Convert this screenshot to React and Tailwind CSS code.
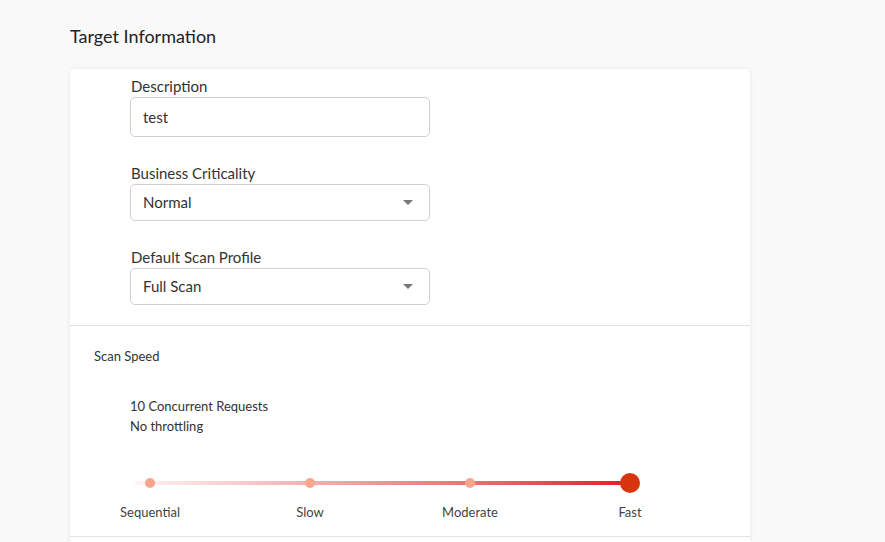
import React from "react";

function Field({ label, children }) {
  return (
    <div className="flex flex-col">
      <div className="h-[20px] leading-[18px] text-[15px] text-[#333] pl-[1px]">{label}</div>
      {children}
    </div>
  );
}

function Select({ value }) {
  return (
    <div className="w-[300px] h-[37px] border border-[#d0d0d0] rounded-[5px] flex items-center justify-between pl-[12px] pr-[16px] text-[15px] text-[#333]">
      <span>{value}</span>
      <svg width="10" height="6" viewBox="0 0 10 6"><path d="M0 0 L10 0 L5 5 Z" fill="#777" /></svg>
    </div>
  );
}

export default function App() {
  const labels = ["Sequential", "Slow", "Moderate", "Fast"];
  return (
    <div className="min-h-[542px] bg-[#f9f9f9] pl-[70px] pt-[25px]" style={{ fontFamily: "Lato, 'Noto Sans', sans-serif" }}>
      <h2 className="text-[18px] leading-[22px] text-[#222] h-[22px]">Target Information</h2>
      <div className="mt-[22px] w-[680px] bg-white rounded-[4px] shadow-[0_0_4px_rgba(0,0,0,0.08)]">
        <div className="pl-[60px] pt-[8px] pb-[20px] flex flex-col gap-[27px]">
          <Field label="Description">
            <div className="w-[300px] h-[40px] border border-[#d0d0d0] rounded-[5px] flex items-center pl-[12px] text-[15px] text-[#333]">test</div>
          </Field>
          <Field label="Business Criticality">
            <Select value="Normal" />
          </Field>
          <Field label="Default Scan Profile">
            <Select value="Full Scan" />
          </Field>
        </div>
        <div className="border-t border-[#e3e3e3] pt-[21px] pb-[14px]">
          <div className="pl-[24px] text-[13px] leading-[18px] text-[#333]">Scan Speed</div>
          <div className="pl-[60px] mt-[31px] text-[13px] leading-[20px] text-[#333]">
            <div>10 Concurrent Requests</div>
            <div>No throttling</div>
          </div>
          <svg className="mt-[35px] block" width="680" height="24" viewBox="0 0 680 24">
            <defs>
              <linearGradient id="trk" x1="0" x2="1" y1="0" y2="0">
                <stop offset="0" stopColor="#fff4f4" />
                <stop offset="0.35" stopColor="#f4b0b2" />
                <stop offset="0.7" stopColor="#ea6c70" />
                <stop offset="1" stopColor="#e01e28" />
              </linearGradient>
            </defs>
            <rect x="65" y="10" width="495" height="4" fill="url(#trk)" />
            <circle cx="80" cy="12" r="5" fill="#f8a58d" />
            <circle cx="240" cy="12" r="5" fill="#f8a58d" />
            <circle cx="400" cy="12" r="5" fill="#f8a58d" />
            <circle cx="560" cy="12" r="10" fill="#d8340e" />
          </svg>
          <div className="grid grid-cols-[160px_160px_160px_160px] mt-[7px] text-[13px] leading-[20px] text-[#444]">
            {labels.map((l) => (
              <div key={l} className="text-center">{l}</div>
            ))}
          </div>
        </div>
        <div className="border-t border-[#e3e3e3] h-[10px]" />
      </div>
    </div>
  );
}
